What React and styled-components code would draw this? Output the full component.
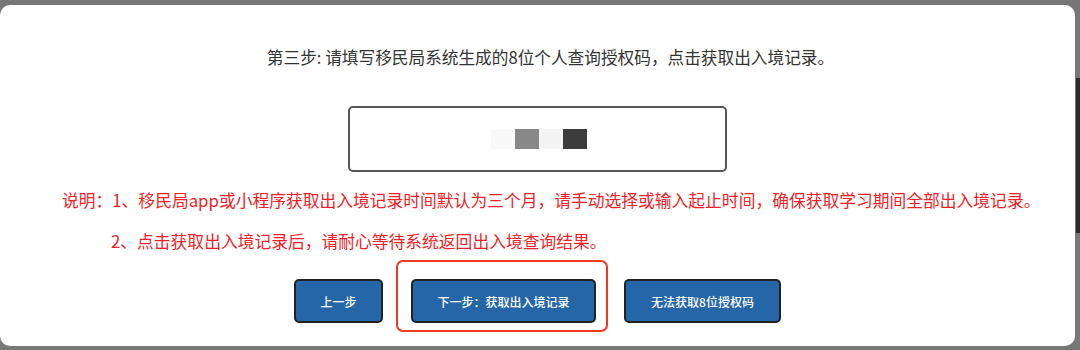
import styled, { createGlobalStyle } from 'styled-components';

const GlobalStyle = createGlobalStyle`
  html, body {
    margin: 0;
    padding: 0;
    background: #777777;
    height: 350px;
    overflow: hidden;
  }
  body {
    font-family: "Noto Sans CJK SC", "Noto Sans", sans-serif;
  }
`;

const Page = styled.div`
  display: flex;
  align-items: flex-start;
  width: 1080px;
  height: 350px;
`;

const Card = styled.div`
  box-sizing: border-box;
  width: 1075px;
  height: 341px;
  margin-top: 5px;
  background: #ffffff;
  border-radius: 10px;
  padding-top: 40px;
  display: flex;
  flex-direction: column;
  align-items: center;
`;

const Track = styled.div`
  width: 4px;
  margin-left: 1px;
`;

const Thumb = styled.div`
  margin-top: 78px;
  height: 155px;
  background: #2c2c2c;
`;

const Title = styled.p`
  margin: 0 0 37px;
  padding-left: 26px;
  font-size: 16.66px;
  line-height: 24px;
  color: #333333;
`;

const CodeBox = styled.div`
  box-sizing: border-box;
  width: 379px;
  height: 66px;
  border: 2px solid #555555;
  border-radius: 5px;
  display: flex;
  align-items: center;
  justify-content: center;
  padding-left: 3px;
`;

const Mask = styled.span`
  width: 24px;
  height: 20px;
  background: ${p => p.$tone};
`;

const Notes = styled.div`
  box-sizing: border-box;
  align-self: stretch;
  margin: 16px 0 0;
  padding-left: 62px;
  display: flex;
  flex-direction: column;
  gap: 17px;
  color: #f01e28;
  font-size: 16.77px;
  line-height: 24px;
`;

const NoteLine = styled.div`
  padding-left: ${p => (p.$indent ? '49px' : '0')};
  white-space: nowrap;
`;

const Actions = styled.div`
  margin-top: 26px;
  display: flex;
  gap: 28px;
`;

const Button = styled.button`
  box-sizing: border-box;
  width: ${p => p.$w}px;
  height: 44px;
  background: #2566a8;
  border: 2px solid #222222;
  border-radius: 5px;
  color: #ffffff;
  font-family: "Noto Sans CJK SC", "Noto Sans", sans-serif;
  font-size: 12px;
  font-weight: 500;
  cursor: pointer;
`;

const Highlight = styled.div`
  position: relative;

  &::after {
    content: '';
    position: absolute;
    top: -19px;
    left: -15px;
    right: -12px;
    bottom: -9px;
    border: 2px solid #ec3b22;
    border-radius: 7px;
    pointer-events: none;
  }
`;

const masks = ['#f9f9f9', '#888888', '#f4f4f4', '#3c3c3c'];

export default function App() {
  return (
    <Page>
      <GlobalStyle />
      <Card>
        <Title>第三步: 请填写移民局系统生成的8位个人查询授权码，点击获取出入境记录。</Title>
        <CodeBox>
          {masks.map((tone, i) => (
            <Mask key={i} $tone={tone} />
          ))}
        </CodeBox>
        <Notes>
          <NoteLine>
            说明：1、移民局app或小程序获取出入境记录时间默认为三个月，请手动选择或输入起止时间，确保获取学习期间全部出入境记录。
          </NoteLine>
          <NoteLine $indent>2、点击获取出入境记录后，请耐心等待系统返回出入境查询结果。</NoteLine>
        </Notes>
        <Actions>
          <Button $w={89}>上一步</Button>
          <Highlight>
            <Button $w={185}>下一步：获取出入境记录</Button>
          </Highlight>
          <Button $w={157}>无法获取8位授权码</Button>
        </Actions>
      </Card>
      <Track>
        <Thumb />
      </Track>
    </Page>
  );
}
